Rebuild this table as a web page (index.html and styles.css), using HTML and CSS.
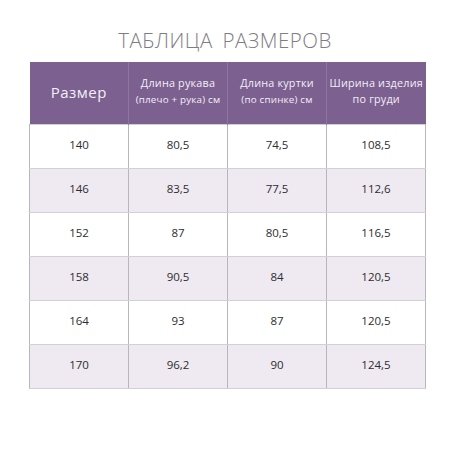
FILE: index.html
```html
<!DOCTYPE html>
<html lang="ru">
<head>
<meta charset="utf-8">
<link rel="stylesheet" href="styles.css">
</head>
<body>
<div class="page">
  <h1 class="title">ТАБЛИЦА РАЗМЕРОВ</h1>
  <table class="sizes">
    <thead>
      <tr>
        <th class="big">Размер</th>
        <th>Длина рукава<br><span class="sub">(плечо + рука) см</span></th>
        <th>Длина куртки<br><span class="sub">(по спинке) см</span></th>
        <th>Ширина изделия<br>по груди</th>
      </tr>
    </thead>
    <tbody>
      <tr><td>140</td><td>80,5</td><td>74,5</td><td>108,5</td></tr>
      <tr class="alt"><td>146</td><td>83,5</td><td>77,5</td><td>112,6</td></tr>
      <tr><td>152</td><td>87</td><td>80,5</td><td>116,5</td></tr>
      <tr class="alt"><td>158</td><td>90,5</td><td>84</td><td>120,5</td></tr>
      <tr><td>164</td><td>93</td><td>87</td><td>120,5</td></tr>
      <tr class="alt"><td>170</td><td>96,2</td><td>90</td><td>124,5</td></tr>
    </tbody>
  </table>
</div>
</body>
</html>
```

FILE: styles.css
```css
html, body {
  margin: 0;
  padding: 0;
  background: #ffffff;
}
.page {
  width: 450px;
  height: 450px;
  padding-top: 27px;
  box-sizing: border-box;
}
.title {
  margin: 0 0 9px 0;
  height: 26px;
  line-height: 26px;
  text-align: center;
  font-family: "Open Sans", sans-serif;
  font-weight: 300;
  font-size: 20.5px;
  letter-spacing: 0.5px;
  word-spacing: 4px;
  color: #807c84;
}
.sizes {
  margin-left: 29px;
  width: 397px;
  border-collapse: collapse;
  table-layout: fixed;
  font-family: "Open Sans", sans-serif;
}
.sizes th {
  background: #7b6090;
  color: #f4eff7;
  font-weight: 400;
  font-size: 10.8px;
  line-height: 16px;
  height: 58px;
  padding: 0 1px 4px;
  text-align: center;
  border-left: 1px solid #8d76a0;
  letter-spacing: 0.2px;
}
.sizes th:first-child {
  border-left: none;
}
.sizes th.big {
  font-size: 15px;
  letter-spacing: 0.5px;
  padding-bottom: 2px;
}
.sizes .sub {
  font-size: 9.8px;
}
.sizes td {
  height: 39px;
  padding: 0 0 4px;
  text-align: center;
  font-size: 11.5px;
  color: #2e2c30;
  border: 1px solid #d3cfd6;
  border-left-color: #b9b5bc;
  border-right-color: #b9b5bc;
}
.sizes tr.alt td {
  background: #efeaf1;
}
```
